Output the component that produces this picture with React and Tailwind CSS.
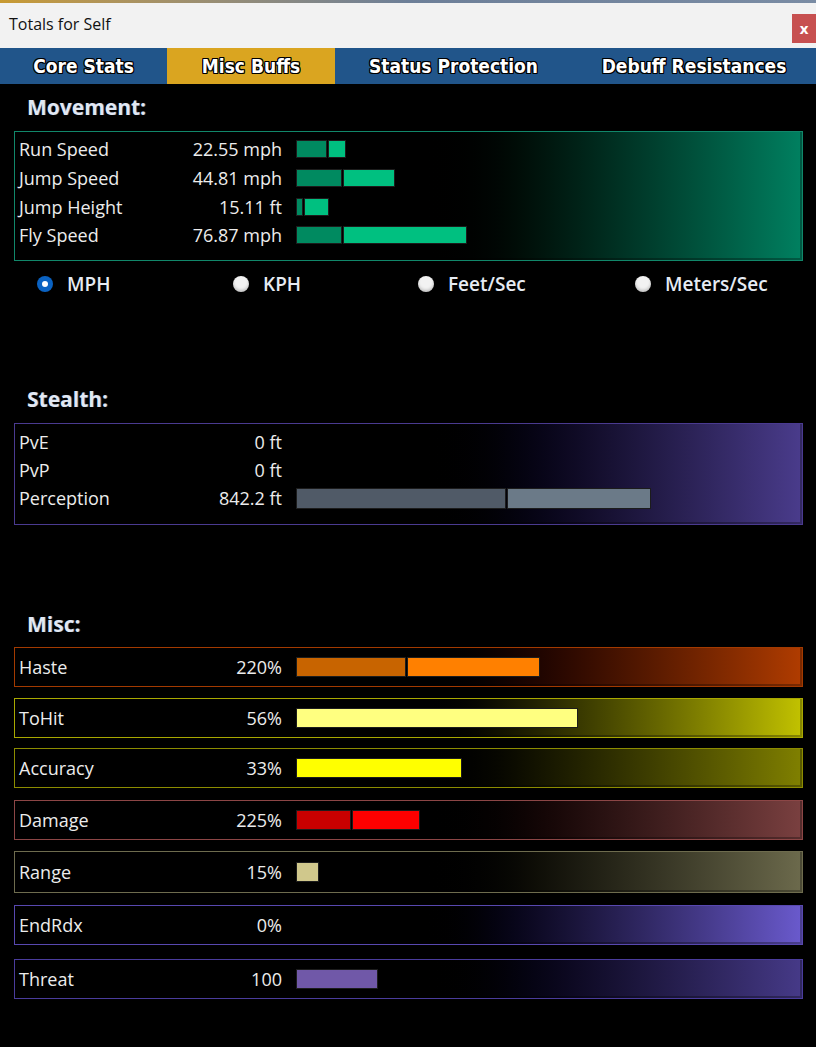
const ui = { fontFamily: '"Open Sans", "Noto Sans", sans-serif' };
const tabFont = { fontFamily: '"DejaVu Sans Condensed", "DejaVu Sans", sans-serif' };

const outline =
  "[text-shadow:-1px_-1px_0_#000,1px_-1px_0_#000,-1px_1px_0_#000,1px_1px_0_#000,0_1px_0_#000,0_-1px_0_#000,1px_0_0_#000,-1px_0_0_#000]";

function Segments({ parts, h = "h-[18px]" }) {
  return (
    <div className={`flex ml-[14px] ${h}`}>
      {parts.map((p, i) => (
        <div
          key={i}
          className={`h-full border border-[#1c1c1c] ${i > 0 ? "ml-px" : ""}`}
          style={{ width: p.w, background: p.c }}
        />
      ))}
    </div>
  );
}

function Row({ label, value, parts, h, rowH = "h-[28.7px]" }) {
  return (
    <div className={`flex items-center ${rowH}`}>
      <div className="w-[263px] flex justify-between text-[18px] text-[#ececec] leading-none">
        <span>{label}</span>
        <span>{value}</span>
      </div>
      {parts && <Segments parts={parts} h={h} />}
    </div>
  );
}

function Heading({ children, className = "" }) {
  return (
    <div className={`pl-[27px] h-[24px] flex items-center text-[21px] font-bold text-[#e2e8f2] [text-shadow:1px_0_0_rgba(90,140,220,0.45)] ${className}`}>
      {children}
    </div>
  );
}

function Radio({ label, checked, width }) {
  return (
    <div className="flex items-center" style={{ width }}>
      {checked ? (
        <div className="w-[16px] h-[16px] rounded-full bg-[#0a62c2] flex items-center justify-center">
          <div className="w-[6px] h-[6px] rounded-full bg-white" />
        </div>
      ) : (
        <div className="w-[16px] h-[16px] rounded-full bg-[#f2f2f2] shadow-[inset_0_-2px_3px_rgba(0,0,0,0.2)]" />
      )}
      <span className="ml-[14px] text-[19px] font-semibold text-[#e6ebf3] leading-none">{label}</span>
    </div>
  );
}

const misc = [
  { label: "Haste", value: "220%", mt: "mt-[10px]", border: "border-[#a33a00]", to: "to-[#b03c00]", parts: [{ w: 110, c: "#c86400" }, { w: 133, c: "#ff8000" }] },
  { label: "ToHit", value: "56%", mt: "mt-[11px]", border: "border-[#a8a800]", to: "to-[#c2c200]", parts: [{ w: 282, c: "#ffff80" }] },
  { label: "Accuracy", value: "33%", mt: "mt-[10px]", border: "border-[#8c8c00]", to: "to-[#808000]", parts: [{ w: 166, c: "#ffff00" }] },
  { label: "Damage", value: "225%", mt: "mt-[12px]", border: "border-[#8c4646]", to: "to-[#7a4040]", parts: [{ w: 55, c: "#c80000" }, { w: 68, c: "#ff0000" }] },
  { label: "Range", value: "15%", mt: "mt-[11px]", border: "border-[#6e6c4e]", to: "to-[#6c6a4c]", parts: [{ w: 23, c: "#d0c88c" }], h42: true },
  { label: "EndRdx", value: "0%", mt: "mt-[12px]", border: "border-[#5848b0]", to: "to-[#6a5acd]" },
  { label: "Threat", value: "100", mt: "mt-[14px]", border: "border-[#4a3c9c]", to: "to-[#463a88]", parts: [{ w: 82, c: "#7058a8" }] },
];

export default function App() {
  return (
    <div className="w-[816px] h-[1047px] bg-black overflow-hidden" style={ui}>
      {/* game art strip */}
      <div className="h-[3px] bg-linear-to-r from-[#c89a30] via-[#6d7f98] to-[#7a8ca4]" />

      {/* Title bar */}
      <div className="h-[45px] bg-[#f2f2f2] flex items-start">
        <span className="ml-[9px] mt-[13px] text-[16px] text-[#111] leading-none">Totals for Self</span>
        <div className="ml-auto mt-[11px] w-[24px] h-[29px] bg-[#c75050] flex items-center justify-center text-white font-bold text-[15px] leading-none">
          x
        </div>
      </div>

      {/* Tabs */}
      <div className="h-[36px] bg-[#21558a] flex text-white font-bold text-[19px]" style={tabFont}>
        <div className={`w-[167px] flex items-center justify-center ${outline}`}>Core Stats</div>
        <div className={`w-[168px] flex items-center justify-center bg-[#daa520] ${outline}`}>Misc Buffs</div>
        <div className={`w-[237px] flex items-center justify-center ${outline}`}>Status Protection</div>
        <div className={`flex-1 flex items-center justify-center ${outline}`}>Debuff Resistances</div>
      </div>

      {/* Movement */}
      <Heading className="mt-[12px]">Movement:</Heading>
      <div className="mt-[11px] ml-[14px] w-[789px] h-[130px] border border-[#11876a] bg-linear-to-r from-black from-[51%] to-[#008060] shadow-[inset_-2px_-2px_0_rgba(0,0,0,0.3)] pl-[4px] pt-[3px]">
        <Row label="Run Speed" value="22.55 mph" parts={[{ w: 31, c: "#008a60" }, { w: 18, c: "#00c080" }]} />
        <Row label="Jump Speed" value="44.81 mph" parts={[{ w: 46, c: "#008a60" }, { w: 52, c: "#00c080" }]} />
        <Row label="Jump Height" value="15.11 ft" parts={[{ w: 7, c: "#008a60" }, { w: 25, c: "#00c080" }]} />
        <Row label="Fly Speed" value="76.87 mph" parts={[{ w: 46, c: "#008a60" }, { w: 124, c: "#00c080" }]} />
      </div>

      <div className="mt-[11px] h-[24px] pl-[37px] flex items-center">
        <Radio label="MPH" checked width={196} />
        <Radio label="KPH" width={185} />
        <Radio label="Feet/Sec" width={217} />
        <Radio label="Meters/Sec" />
      </div>

      {/* Stealth */}
      <Heading className="mt-[92px]">Stealth:</Heading>
      <div className="mt-[11px] ml-[14px] w-[789px] h-[102px] border border-[#4a3a90] bg-linear-to-r from-black from-[51%] to-[#4a3c8c] shadow-[inset_-2px_-2px_0_rgba(0,0,0,0.3)] pl-[4px] pt-[4px]">
        <Row label="PvE" value="0 ft" rowH="h-[28px]" />
        <Row label="PvP" value="0 ft" rowH="h-[28px]" />
        <Row label="Perception" value="842.2 ft" rowH="h-[28px]" h="h-[21px]" parts={[{ w: 210, c: "#505a67" }, { w: 144, c: "#6b7a88" }]} />
      </div>

      {/* Misc */}
      <Heading className="mt-[88px]">Misc:</Heading>
      {misc.map((m) => (
        <div
          key={m.label}
          className={`${m.mt} ml-[14px] w-[789px] ${m.h42 ? "h-[42px]" : "h-[40px]"} border ${m.border} bg-linear-to-r from-black from-[51%] ${m.to} shadow-[inset_-2px_-2px_0_rgba(0,0,0,0.3)] pl-[4px] flex items-center`}
        >
          <Row label={m.label} value={m.value} rowH="h-full" h="h-[20px]" parts={m.parts} />
        </div>
      ))}
    </div>
  );
}
